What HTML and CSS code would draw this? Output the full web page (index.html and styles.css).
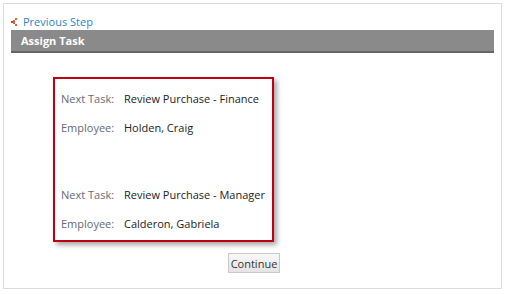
FILE: index.html
```html
<!DOCTYPE html>
<html lang="en">
<head>
  <meta charset="UTF-8" />
  <title>Assign Task</title>
  <link rel="stylesheet" href="styles.css">
</head>
<body>
  <div class="panel">
    <div class="prev-step">
      <svg class="prev-icon" width="6" height="8" viewBox="0 0 6 8">
        <rect x="4" y="0" width="2" height="2" fill="#e0603a" />
        <rect x="2" y="2" width="2" height="2" fill="#e0603a" />
        <rect x="0" y="3" width="2" height="2" fill="#d04020" />
        <rect x="2" y="4" width="2" height="2" fill="#e0603a" />
        <rect x="4" y="6" width="2" height="2" fill="#e0603a" />
      </svg>
      <a href="#">Previous Step</a>
    </div>
    <div class="title-bar">Assign Task</div>

    <div class="task-box">
      <div class="task-row"><span class="label">Next Task:</span><span class="value">Review Purchase - Finance</span></div>
      <div class="task-row"><span class="label">Employee:</span><span class="value">Holden, Craig</span></div>
      <div class="spacer"></div>
      <div class="task-row"><span class="label">Next Task:</span><span class="value">Review Purchase - Manager</span></div>
      <div class="task-row"><span class="label">Employee:</span><span class="value">Calderon, Gabriela</span></div>
    </div>

    <div class="actions">
      <button class="btn">Continue</button>
    </div>
  </div>
</body>
</html>
```
FILE: styles.css
```css
body {
  margin: 0;
  padding: 3px;
  background: #fff;
  font-family: 'Open Sans', sans-serif;
  font-size: 11px;
  color: #222;
}
.panel {
  width: 483px;
  height: 284px;
  border: 1px solid #dcdcdc;
  padding: 0 7px;
}
.prev-step {
  display: flex;
  align-items: center;
  gap: 6px;
  height: 14px;
  padding-top: 10px;
  margin-bottom: 2px;
}
.prev-icon {
  margin-top: 1px;
}
.prev-step a {
  color: #2a87c9;
  text-decoration: none;
}
.title-bar {
  background: #8a8a8a;
  border-bottom: 2px solid #666;
  color: #fff;
  font-weight: bold;
  height: 21px;
  line-height: 21px;
  padding-left: 10px;
}
.task-box {
  margin: 24px 0 0 42px;
  width: 211px;
  border: 2px solid #c00010;
  box-shadow: 3px 3px 5px rgba(0, 0, 0, 0.35);
  padding: 5px 0 2px 6px;
}
.task-row {
  display: flex;
  height: 29px;
  line-height: 29px;
}
.label {
  color: #666a77;
  width: 63px;
}
.value {
  color: #222;
}
.spacer {
  height: 38px;
}
.actions {
  display: flex;
  justify-content: center;
  margin-top: 11px;
  padding-left: 3px;
}
.btn {
  font-family: 'Open Sans', sans-serif;
  font-size: 11px;
  color: #333;
  width: 52px;
  height: 20px;
  padding: 0;
  border: 1px solid #c8c8c8;
  background: linear-gradient(#f8f8f8, #e4e4e4);
  border-radius: 0;
}
```
